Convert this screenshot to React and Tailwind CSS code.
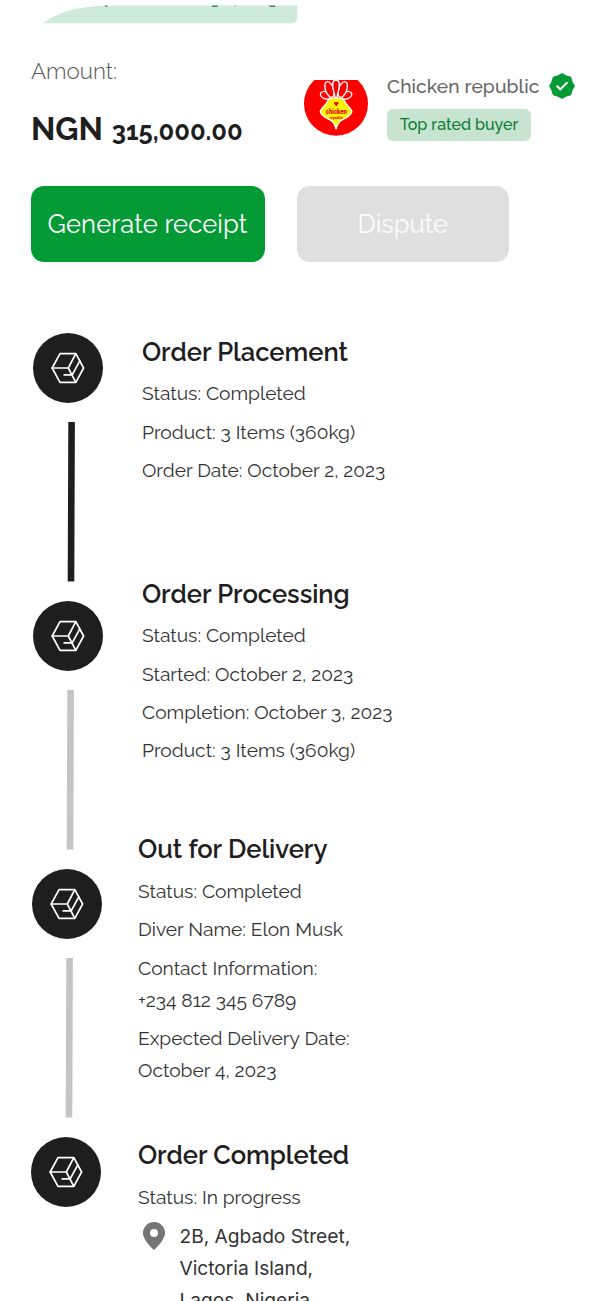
const raleway = "font-['Raleway','Lato',sans-serif]";

function TopBanner() {
  return (
    <svg className="ml-10 block" width="262" height="24" viewBox="40 0 262 24">
      <path d="M43 23.3C57 13 75 6 112 5.6H297.3V18.3a5 5 0 0 1-5 5Z" fill="#cdebd8" />
      <g stroke="#2c8a4b" strokeWidth="1.3" fill="none">
        <path d="M105 6.2h2.4" />
        <path d="M212 5.9q2.800 1 5.600 0" />
        <path d="M234.500 6h1.800" opacity=".4" />
        <path d="M269.500 5.900q2.800 1 5.600 0" />
      </g>
    </svg>
  );
}

function ChickenLogo() {
  return (
    <svg className="block" width="64" height="56" viewBox="304 80 64 56">
      <circle cx="336" cy="103.700" r="32" fill="#ff0000" />
      <g fill="#ff0000" stroke="#fff" strokeWidth="1.400">
        <ellipse cx="325.600" cy="95.300" rx="5.400" ry="3.500" transform="rotate(22 325.600 95.300)" />
        <ellipse cx="346.600" cy="95.300" rx="5.400" ry="3.500" transform="rotate(-22 346.600 95.300)" />
        <ellipse cx="329.500" cy="89.500" rx="4" ry="8.200" transform="rotate(-20 329.500 89.500)" />
        <ellipse cx="342.700" cy="89.500" rx="4" ry="8.200" transform="rotate(20 342.700 89.500)" />
        <path d="M335 97.500c-.3-5-4.200-11-1.500-16.500q2.500-1.600 5 0c2.700 5.500-1.200 11.500-1.500 16.500Z" />
      </g>
      <path
        d="M328.300 99.300q7.800-2.800 15.600 0c.8 5 6.300 7.500 8 12.200-1.200 5.500-8.400 7-11.700 9.700q-3 2.600-4.100 8.300-1.100-5.700-4.100-8.300c-3.300-2.700-10.500-4.200-11.700-9.700 1.700-4.700 7.200-7.200 8-12.200Z"
        fill="#fff200"
        stroke="#fff"
        strokeWidth="1.300"
      />
      <path d="M333.500 102.500q2.500-1 5.500 0l-2.700 4Z" fill="#e30613" />
      <text x="336.300" y="114.300" textAnchor="middle" textLength="21" lengthAdjust="spacingAndGlyphs" fill="#e30613" className="font-['Roboto',sans-serif] text-[6.500px] font-black">
        chicken
      </text>
      <text x="336.300" y="118.800" textAnchor="middle" textLength="13" lengthAdjust="spacingAndGlyphs" fill="#e30613" className="font-['Roboto',sans-serif] text-[4.200px] font-bold">
        republic
      </text>
    </svg>
  );
}

function VerifiedBadge() {
  return (
    <svg className="-my-1 block shrink-0" width="30" height="30" viewBox="0 0 24 24">
      <path
        fill="#049a35"
        stroke="#049a35"
        strokeWidth="1"
        strokeLinejoin="round"
        d="M12 2.200 15 3.900 18.900 5.100 20.100 9 21.800 12 20.100 15 18.900 18.900 15 20.100 12 21.800 9 20.100 5.100 18.900 3.900 15 2.200 12 3.900 9 5.100 5.100 9 3.900Z"
      />
      <path d="m8.200 12.300 2.500 2.400 5.100-5.200" fill="none" stroke="#fff" strokeWidth="1.700" strokeLinecap="round" strokeLinejoin="round" />
    </svg>
  );
}

function BoxMark() {
  return (
    <div className="flex size-[70px] items-center justify-center rounded-full bg-[#1e1e1e]">
      <svg width="34" height="32" viewBox="0 0 34 32" fill="none" stroke="#fff" strokeWidth="1.700" strokeLinejoin="round" strokeLinecap="round">
        <path d="M1.200 16 9 1.700h15.800L32.600 16l-7.800 14.300H9Z" />
        <path d="M1.200 16h16.100l7.500-14.300M17.300 16l7.500 14.300" />
        <path d="M13.200 22.900h8l7.600-14" />
      </svg>
    </div>
  );
}

function Bar({ dark }) {
  return (
    <svg className="my-[19px] ml-[34px] block" width="8" height="160" viewBox="0 0 8 160">
      <path d="M1.300 0H7.900L7.300 159.500H.700Z" fill={dark ? "#1e1e1e" : "#c4c4c4"} />
    </svg>
  );
}

function Stage({ title, rows, className }) {
  return (
    <section className={className}>
      <h2 className="mb-[5.900px] h-[38.400px] text-[25.600px] leading-[38.400px] font-semibold tracking-[-0.030px] text-[#1e1e1e]">{title}</h2>
      <div className="flex flex-col gap-[6.400px] text-[19.200px] leading-8 text-[#333]">
        {rows.map((row) => (
          <p key={row} className="whitespace-pre-line">{row}</p>
        ))}
      </div>
    </section>
  );
}

export default function App() {
  return (
    <main className={`h-[1301px] w-[602px] overflow-hidden bg-white ${raleway} whitespace-nowrap`}>
      <TopBanner />

      <header className="flex h-[162px] pl-[31px]">
        <div className="w-[273px] pt-[30px]">
          <p className="text-[22.400px] leading-[34px] font-light text-[#555]">Amount:</p>
          <p className="mt-[17px] flex items-baseline gap-[9px] leading-[48px] font-bold text-[#1e1e1e]">
            <span className="text-[32px] tracking-[-0.100px]">NGN</span>
            <span className="text-[25.600px] tracking-[-0.050px]">315,000.00</span>
          </p>
        </div>
        <div className="pt-14">
          <ChickenLogo />
        </div>
        <div className="ml-[19px] pt-[48px]">
          <div className="flex h-[28px] items-center gap-2">
            <span className="text-[19.200px] font-medium tracking-[0.1px] text-[#666]">Chicken republic</span>
            <VerifiedBadge />
          </div>
          <span className="mt-[9px] flex h-8 w-36 items-center justify-center rounded-[6px] bg-[#c6e4d0] text-base font-medium text-[#0c7a35]">
            Top rated buyer
          </span>
        </div>
      </header>

      <div className="flex gap-8 pl-[31px]">
        <button className="h-[76.400px] w-[234px] rounded-[13px] bg-[#049a35] pr-px text-[25.600px] tracking-[0.100px] text-white shadow-[9px_17px_0_-9px_#fbfbfb]">
          Generate receipt
        </button>
        <button className="h-[76.400px] w-[212.400px] rounded-[13px] bg-[#dfdfdf] pr-px text-[25.600px] text-white/90">Dispute</button>
      </div>

      <div className="flex pt-[70.600px] pl-[31px]">
        <div className="w-[107px]">
          <div className="ml-[2px]"><BoxMark /></div>
          <div className="ml-[2px]"><Bar dark /></div>
          <div className="ml-[1.500px]"><BoxMark /></div>
          <div className="ml-[1px]"><Bar /></div>
          <div className="ml-[1px]"><BoxMark /></div>
          <Bar />
          <BoxMark />
        </div>

        <div>
          <Stage
            className="h-[242px] pl-1"
            title="Order Placement"
            rows={["Status: Completed", "Product: 3 Items (360kg)", "Order Date: October 2, 2023"]}
          />
          <Stage
            className="h-[255.500px] pl-1"
            title="Order Processing"
            rows={["Status: Completed", "Started: October 2, 2023", "Completion: October 3, 2023", "Product: 3 Items (360kg)"]}
          />
          <Stage
            className="h-[306px]"
            title="Out for Delivery"
            rows={[
              "Status: Completed",
              "Diver Name: Elon Musk",
              "Contact Information:\n+234 812 345 6789",
              "Expected Delivery Date:\nOctober 4, 2023",
            ]}
          />
          <Stage title="Order Completed" rows={["Status: In progress"]} />
          <div className="mt-[7.200px] flex pl-[5px]">
            <svg className="mt-[2px] block" width="22" height="28" viewBox="0 0 22 28">
              <path fillRule="evenodd" fill="#757575" d="M11 0A11 11 0 0 0 0 11c0 7.500 11 17 11 17s11-9.500 11-17A11 11 0 0 0 11 0Zm0 15a4 4 0 1 1 0-8 4 4 0 0 1 0 8Z" />
            </svg>
            <address className="ml-[14.500px] font-['Inter',sans-serif] text-[19.200px] leading-8 tracking-[-0.030px] text-[#333] not-italic">
              2B, Agbado Street,
              <br />
              Victoria Island,
              <br />
              Lagos, Nigeria
            </address>
          </div>
        </div>
      </div>
    </main>
  );
}
